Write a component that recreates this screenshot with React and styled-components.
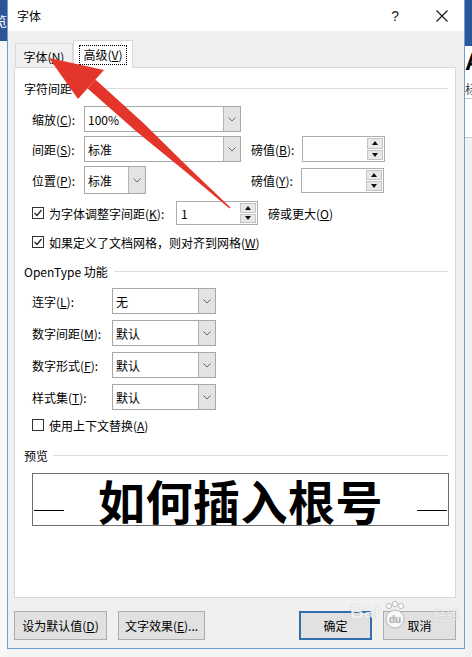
import React from "react";
import styled, { createGlobalStyle } from "styled-components";

const Global = createGlobalStyle`
  html, body { margin: 0; padding: 0; }
  body {
    font-family: "Noto Sans CJK SC", "Noto Sans", sans-serif;
    font-size: 12px;
    color: #000;
    background: #f4f4f4;
    overflow: hidden;
  }
`;

const Screen = styled.div`
  position: relative;
  width: 472px;
  height: 657px;
  display: flex;
  overflow: hidden;
  background: #f4f4f4;
`;

const SideStrip = styled.div`
  width: 7px;
  flex: none;
  display: flex;
  flex-direction: column;
  overflow: hidden;
  background: ${(p) => p.$bg};
`;

const Ribbon = styled.div`
  height: ${(p) => p.$h}px;
  flex: none;
  background: #2b579a;
  color: #fff;
  display: flex;
  align-items: center;
  justify-content: ${(p) => p.$align};
  overflow: hidden;
  white-space: nowrap;
  font-size: 13px;
`;

const DocArea = styled.div`
  display: flex;
  flex-direction: column;
  background: #fff;
  overflow: hidden;
  white-space: nowrap;
`;

const DocGlyph = styled.div`
  height: ${(p) => p.$h}px;
  display: flex;
  align-items: center;
  font-family: ${(p) => (p.$latin ? '"Liberation Sans", sans-serif' : "inherit")};
  font-weight: ${(p) => (p.$bold ? 700 : 400)};
  font-size: ${(p) => p.$size}px;
  color: ${(p) => p.$color || "#000"};
  border-bottom: ${(p) => (p.$line ? "1px solid #c8c8c8" : "none")};
`;

const Dialog = styled.div`
  width: 458px;
  height: 649px;
  flex: none;
  box-sizing: border-box;
  border: 1px solid #6f9fd4;
  border-top: none;
  background: #f0f0f0;
  display: flex;
  flex-direction: column;
`;

const TitleBar = styled.div`
  height: 31px;
  flex: none;
  background: #fff;
  display: flex;
  align-items: center;
  padding: 0 16px 0 9px;
`;

const TitleText = styled.span`
  font-size: 12px;
`;

const TitleTools = styled.div`
  margin-left: auto;
  display: flex;
  align-items: center;
  gap: 37px;
`;

const HelpMark = styled.span`
  font-family: "Liberation Sans", sans-serif;
  font-size: 14px;
  color: #222;
`;

const Body = styled.div`
  flex: 1;
  display: flex;
  flex-direction: column;
  padding: 9px 8px 0 6px;
`;

const TabRow = styled.div`
  position: relative;
  z-index: 1;
  height: 28px;
  margin-bottom: -1px;
  display: flex;
  align-items: flex-end;
  padding-left: 1px;
`;

const Tab = styled.div`
  box-sizing: border-box;
  width: ${(p) => (p.$active ? 60 : 58)}px;
  height: ${(p) => (p.$active ? 28 : 24)}px;
  margin-bottom: ${(p) => (p.$active ? 0 : 1)}px;
  border: 1px solid #d9d9d9;
  border-bottom: none;
  background: ${(p) => (p.$active ? "#fff" : "#f0f0f0")};
  display: flex;
  align-items: center;
  justify-content: center;
  padding-top: ${(p) => (p.$active ? 0 : 1)}px;
`;

const FocusText = styled.span`
  border: 1px dotted #000;
  padding: 1px 3px;
  line-height: 16px;
`;

const Panel = styled.div`
  box-sizing: border-box;
  height: 531px;
  flex: none;
  background: #fff;
  border: 1px solid #d9d9d9;
  padding: 0 6px 0 9px;
  display: flex;
  flex-direction: column;
`;

const SectionHead = styled.div`
  height: 16px;
  margin-top: ${(p) => p.$mt}px;
  display: flex;
  align-items: center;
  gap: ${(p) => p.$gap || 6}px;
  white-space: nowrap;
  &::after {
    content: "";
    flex: 1;
    height: 1px;
    background: #dcdcdc;
    margin-right: 1px;
  }
`;

const Row = styled.div`
  height: ${(p) => p.$h}px;
  margin-top: ${(p) => p.$mt}px;
  padding-left: 8px;
  display: flex;
  align-items: center;
  white-space: nowrap;
`;

const Label = styled.span`
  width: ${(p) => p.$w}px;
  flex: none;
  margin-left: ${(p) => p.$ml || 0}px;
`;

const U = styled.span`
  text-decoration: underline;
  text-underline-offset: 1px;
`;

const Combo = styled.div`
  box-sizing: border-box;
  width: ${(p) => p.$w}px;
  height: ${(p) => p.$h || 26}px;
  flex: none;
  border: 1px solid #a8a8a8;
  background: #fff;
  display: flex;
`;

const ComboValue = styled.span`
  flex: 1;
  padding-left: 3px;
  display: flex;
  align-items: center;
`;

const DropBtn = styled.span`
  width: 16px;
  flex: none;
  background: #e3e3e3;
  border-left: 1px solid #b4b4b4;
  display: flex;
  align-items: center;
  justify-content: center;
`;

const Spin = styled.div`
  box-sizing: border-box;
  width: ${(p) => p.$w}px;
  height: ${(p) => p.$h || 26}px;
  margin-left: ${(p) => p.$ml || 0}px;
  flex: none;
  border: 1px solid #abadb3;
  background: #fff;
  display: flex;
  padding: 1px;
`;

const SpinValue = styled.span`
  flex: 1;
  padding-left: 3px;
  display: flex;
  align-items: center;
`;

const SpinBtns = styled.div`
  width: 16px;
  flex: none;
  display: flex;
  flex-direction: column;
  gap: 1px;
`;

const SpinBtn = styled.span`
  flex: 1;
  box-sizing: border-box;
  border: 1px solid #c4c4c4;
  background: #e8e8e8;
  display: flex;
  align-items: center;
  justify-content: center;
`;

const CheckLabel = styled.label`
  width: ${(p) => (p.$w ? `${p.$w}px` : "auto")};
  flex: none;
  display: flex;
  align-items: center;
  gap: 5px;
`;

const Box = styled.span`
  box-sizing: border-box;
  width: 12px;
  height: 12px;
  flex: none;
  border: 1px solid #333;
  background: #fff;
  display: flex;
  align-items: center;
  justify-content: center;
`;

const Preview = styled.div`
  box-sizing: border-box;
  height: 53px;
  margin: 10px 0 0 8px;
  border: 1px solid #6d6d6d;
  display: flex;
  align-items: center;
`;

const BaseLine = styled.span`
  width: 30px;
  height: 1px;
  flex: none;
  align-self: flex-end;
  margin: 0 1px 14px;
  background: #000;
`;

const PreviewText = styled.span`
  flex: 1;
  text-align: center;
  font-size: 47px;
  font-weight: 700;
  line-height: 1;
  white-space: nowrap;
  letter-spacing: 0.5px;
`;

const ButtonBar = styled.div`
  height: 29px;
  margin-top: 13px;
  display: flex;
  gap: 11px;
`;

const Button = styled.div`
  box-sizing: border-box;
  width: ${(p) => p.$w}px;
  height: 29px;
  margin-left: ${(p) => (p.$push ? "auto" : "0")};
  border: ${(p) => (p.$default ? "2px solid #2f6fae" : "1px solid #adadad")};
  background: #e1e1e1;
  display: flex;
  align-items: center;
  justify-content: center;
  white-space: nowrap;
`;

const Overlay = styled.svg`
  position: absolute;
  left: 0;
  top: 0;
  pointer-events: none;
  z-index: 10;
`;

const Watermark = styled.div`
  position: absolute;
  left: 350px;
  top: 601px;
  z-index: 9;
  pointer-events: none;
  display: flex;
  align-items: flex-end;
  gap: 2px;
  color: rgba(255, 255, 255, 0.8);
  text-shadow: 0 0 1px rgba(120, 120, 120, 0.45);
`;

const WmLatin = styled.span`
  font-family: "Liberation Sans", sans-serif;
  font-size: 19px;
  font-weight: 700;
  line-height: 1;
  margin-bottom: 8px;
`;

const WmCjk = styled.span`
  font-size: 13px;
  line-height: 1;
  margin: 0 0 9px 24px;
`;

const Chevron = () => (
  <svg width="8" height="5" viewBox="0 0 8 5">
    <polyline points="0.5,0.5 4,4 7.5,0.5" fill="none" stroke="#6a6a6a" strokeWidth="1" />
  </svg>
);

const Tri = ({ up }) => (
  <svg width="6" height="4" viewBox="0 0 6 4">
    <polygon points={up ? "0,4 6,4 3,0" : "0,0 6,0 3,4"} fill="#111" />
  </svg>
);

const CheckMark = () => (
  <svg width="10" height="10" viewBox="0 0 10 10">
    <polyline points="1.5,5 4,7.5 8.5,2" fill="none" stroke="#222" strokeWidth="1.2" />
  </svg>
);

const CloseIcon = () => (
  <svg width="12" height="12" viewBox="0 0 12 12">
    <path d="M0.5 0.5 L11.5 11.5 M11.5 0.5 L0.5 11.5" stroke="#111" strokeWidth="1.1" fill="none" />
  </svg>
);

const ComboBox = ({ w, h, value }) => (
  <Combo $w={w} $h={h}>
    <ComboValue>{value}</ComboValue>
    <DropBtn>
      <Chevron />
    </DropBtn>
  </Combo>
);

const SpinBox = ({ w, h, ml, value }) => (
  <Spin $w={w} $h={h} $ml={ml}>
    <SpinValue>{value}</SpinValue>
    <SpinBtns>
      <SpinBtn>
        <Tri up />
      </SpinBtn>
      <SpinBtn>
        <Tri />
      </SpinBtn>
    </SpinBtns>
  </Spin>
);

const Check = ({ checked, w, children }) => (
  <CheckLabel $w={w}>
    <Box>{checked && <CheckMark />}</Box>
    <span>{children}</span>
  </CheckLabel>
);

export default function App() {
  return (
    <>
      <Global />
      <Screen>
        <SideStrip $bg="#f7f7f7">
          <Ribbon $h={41} $align="flex-end">览</Ribbon>
        </SideStrip>

        <Dialog>
          <TitleBar>
            <TitleText>字体</TitleText>
            <TitleTools>
              <HelpMark>?</HelpMark>
              <CloseIcon />
            </TitleTools>
          </TitleBar>

          <Body>
            <TabRow>
              <Tab>
                字体(<U>N</U>)
              </Tab>
              <Tab $active>
                <FocusText>
                  高级(<U>V</U>)
                </FocusText>
              </Tab>
            </TabRow>

            <Panel>
              <SectionHead $mt={12}>字符间距</SectionHead>

              <Row $h={26} $mt={10}>
                <Label $w={52}>
                  缩放(<U>C</U>):
                </Label>
                <ComboBox w={157} value="100%" />
              </Row>
              <Row $h={26} $mt={4}>
                <Label $w={52}>
                  间距(<U>S</U>):
                </Label>
                <ComboBox w={157} value="标准" />
                <Label $w={51} $ml={10}>
                  磅值(<U>B</U>):
                </Label>
                <SpinBox w={83} value="" />
              </Row>
              <Row $h={28} $mt={4}>
                <Label $w={52}>
                  位置(<U>P</U>):
                </Label>
                <ComboBox w={62} h={28} value="标准" />
                <Label $w={50} $ml={105}>
                  磅值(<U>Y</U>):
                </Label>
                <SpinBox w={83} h={25} value="" />
              </Row>

              <Row $h={24} $mt={7}>
                <Check checked w={144}>
                  为字体调整字间距(<U>K</U>):
                </Check>
                <SpinBox w={82} h={24} value="1" />
                <Label $w={90} $ml={10}>
                  磅或更大(<U>O</U>)
                </Label>
              </Row>
              <Row $h={16} $mt={9}>
                <Check checked>
                  如果定义了文档网格，则对齐到网格(<U>W</U>)
                </Check>
              </Row>

              <SectionHead $mt={13}>OpenType 功能</SectionHead>

              <Row $h={26} $mt={9}>
                <Label $w={80}>
                  连字(<U>L</U>):
                </Label>
                <ComboBox w={104} value="无" />
              </Row>
              <Row $h={26} $mt={6}>
                <Label $w={80}>
                  数字间距(<U>M</U>):
                </Label>
                <ComboBox w={104} value="默认" />
              </Row>
              <Row $h={26} $mt={6}>
                <Label $w={80}>
                  数字形式(<U>F</U>):
                </Label>
                <ComboBox w={104} value="默认" />
              </Row>
              <Row $h={26} $mt={6}>
                <Label $w={80}>
                  样式集(<U>T</U>):
                </Label>
                <ComboBox w={104} value="默认" />
              </Row>
              <Row $h={16} $mt={7}>
                <Check>
                  使用上下文替换(<U>A</U>)
                </Check>
              </Row>

              <SectionHead $mt={14} $gap={5}>预览</SectionHead>
              <Preview>
                <BaseLine />
                <PreviewText>如何插入根号</PreviewText>
                <BaseLine />
              </Preview>
            </Panel>

            <ButtonBar>
              <Button $w={93}>
                设为默认值(<U>D</U>)
              </Button>
              <Button $w={87}>
                文字效果(<U>E</U>)...
              </Button>
              <Button $w={73} $push $default>
                确定
              </Button>
              <Button $w={73}>取消</Button>
            </ButtonBar>
          </Body>
        </Dialog>

        <SideStrip $bg="#f2f2f2">
          <Ribbon $h={46} $align="flex-start" />
          <DocArea>
            <DocGlyph $h={32} $size={24} $bold $latin>A</DocGlyph>
            <DocGlyph $h={20} $size={12} $line $color="#444">标</DocGlyph>
            <DocGlyph $h={38} $size={12} $line />
          </DocArea>
        </SideStrip>

        <Watermark>
          <WmLatin>Bai</WmLatin>
          <svg width="26" height="28" viewBox="0 0 26 28">
            <g fill="none" stroke="rgba(150,150,150,0.6)" strokeWidth="1">
              <circle cx="7" cy="5" r="2.6" fill="rgba(255,255,255,0.8)" />
              <circle cx="13" cy="3" r="2.6" fill="rgba(255,255,255,0.8)" />
              <circle cx="19" cy="5" r="2.6" fill="rgba(255,255,255,0.8)" />
              <circle cx="13" cy="18" r="9" fill="rgba(255,255,255,0.8)" />
            </g>
            <text x="13" y="22" textAnchor="middle" fontFamily="Liberation Sans" fontSize="10" fontWeight="700" fill="rgba(170,170,170,0.8)">du</text>
          </svg>
          <WmCjk>经验</WmCjk>
        </Watermark>

        <Overlay width="472" height="657" viewBox="0 0 472 657">
          <polygon points="49,58 78,99 104,70" fill="#e4352a" />
          <polygon
            points="95.4,79.5 143.6,123.3 190.1,168.9 230.5,207.4 229.5,208.6 186.9,172.7 136.4,131.5 87.6,88.5"
            fill="#e4352a"
          />
        </Overlay>
      </Screen>
    </>
  );
}
